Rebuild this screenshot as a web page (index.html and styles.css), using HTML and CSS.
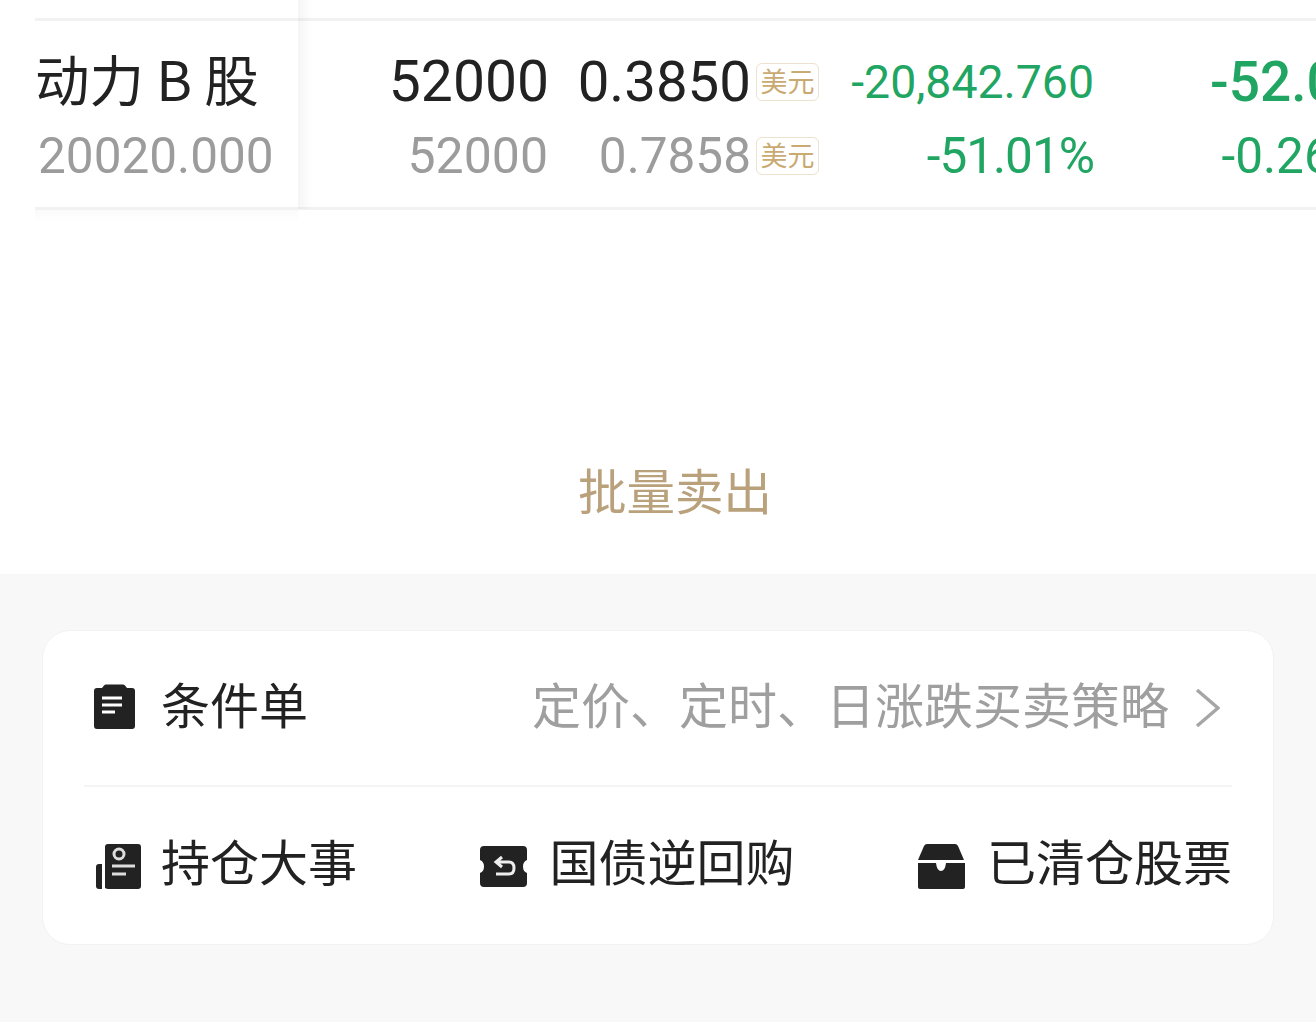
FILE: index.html
```html
<!DOCTYPE html>
<html lang="zh">
<head>
    <meta charset="UTF-8">
    <meta name="viewport" content="width=device-width, initial-scale=1.0">
    <title>持仓</title>
    <link rel="stylesheet" href="styles.css">
</head>
<body>
    <section class="holdings">
        <div class="table-row">
            <div class="cell name-cell">
                <div class="line main-line name">动力 B 股</div>
                <div class="line sub-line name-sub">20020.000</div>
            </div>
            <div class="cell qty-cell">
                <div class="line main-line">52000</div>
                <div class="line sub-line qty-sub">52000</div>
            </div>
            <div class="cell price-cell">
                <div class="line main-line price">0.3850<span class="tag">美元</span></div>
                <div class="line sub-line">0.7858<span class="tag">美元</span></div>
            </div>
            <div class="cell value-cell">
                <div class="line value-line down">-20,842.760</div>
                <div class="line sub-line down pct">-51.01%</div>
            </div>
            <div class="cell today-cell">
                <div class="line main-line down bold">-52.08</div>
                <div class="line sub-line down today-sub">-0.26%</div>
            </div>
        </div>
        <div class="batch-sell">批量卖出</div>
    </section>

    <section class="tools">
        <div class="card">
            <div class="card-row order-row">
                <div class="tool">
                    <svg class="icon" viewBox="0 0 56 56">
                        <path fill="#222" d="M9 11q0-3 3-3h5l2-2.500q1-1 2-1h17q1 0 2 1l2 2.500h5q3 0 3 3v35q0 3-3 3H12q-3 0-3-3z"/>
                        <path stroke="#fff" stroke-width="3" d="M17 18h20M17 25h20M17 32h13" fill="none"/>
                    </svg>
                    <span>条件单</span>
                </div>
                <div class="hint">
                    <span>定价、定时、日涨跌买卖策略</span>
                    <svg class="chevron" viewBox="0 0 28 40"><path d="M5 2l21 18L5 38" fill="none" stroke="#a6a6a6" stroke-width="3.500"/></svg>
                </div>
            </div>
            <div class="card-row links-row">
                <div class="tool">
                    <svg class="icon" viewBox="0 0 56 56">
                        <path fill="#222" d="M20 9q0-3 3-3h30q3 0 3 3v39q0 3-3 3H23q-1 0-3-1z"/>
                        <path fill="#222" d="M11 29q0-3 3-3h3v25h-3q-3 0-3-3z"/>
                        <circle cx="34" cy="16" r="5" fill="none" stroke="#ddd" stroke-width="3"/>
                        <path stroke="#ddd" stroke-width="3" d="M27 28h23M27 36h14" fill="none"/>
                    </svg>
                    <span>持仓大事</span>
                </div>
                <div class="tool">
                    <svg class="icon" viewBox="0 0 56 56">
                        <path fill="#222" d="M11 8h39q4 0 4 4v10q-4 1.500-4 6.500t4 6.500v10q0 4-4 4H11q-4 0-4-4V35q4-1.500 4-6.500t-4-6.500V12q0-4 4-4z"/>
                        <path fill="none" stroke="#eee" stroke-width="3" d="M29 19l-6 5 6 5M23 24h13q5 0 5 6t-5 6H23"/>
                    </svg>
                    <span>国债逆回购</span>
                </div>
                <div class="tool">
                    <svg class="icon" viewBox="-1 0 56 56">
                        <path fill="#222" d="M12 8q1-2 3-2h28q2 0 3 2l6 14H6z"/>
                        <path fill="#222" d="M6 25h18q1 8 5 8t5-8h19v24q0 2-2 2H8q-2 0-2-2z"/>
                    </svg>
                    <span>已清仓股票</span>
                </div>
            </div>
        </div>
    </section>
</body>
</html>
```

FILE: styles.css
```css
body {
    margin: 0;
    height: 1022px;
    overflow: hidden;
    background-color: #f8f8f8;
    color: #222;
    font-family: 'Roboto', 'Noto Sans CJK SC', sans-serif;
}

.holdings {
    height: 574px;
    background: white;
    padding-top: 18px;
    box-sizing: border-box;
    overflow: hidden;
}

.table-row {
    display: flex;
    width: 1400px;
    height: 162px;
    margin-left: 35px;
    padding-top: 24px;
    border-top: 3px solid #f2f2f2;
    border-bottom: 3px solid #f2f2f2;
}

.cell {
    flex: none;
    text-align: right;
}

.line {
    height: 74px;
    line-height: 74px;
    white-space: nowrap;
}

.main-line {
    font-size: 57px;
}

.sub-line {
    font-size: 49.5px;
    color: #9c9c9c;
}

.value-line {
    font-size: 46.4px;
}

.name-cell {
    position: relative;
    width: 263px;
    box-sizing: border-box;
    text-align: left;
}

/* 固定列右侧的阴影 */
.name-cell::after {
    content: "";
    position: absolute;
    top: -45px;
    bottom: -2px;
    right: -14px;
    width: 14px;
    background: linear-gradient(to right, rgba(0,0,0,0.04), rgba(0,0,0,0));
}

/* 固定列底部的阴影 */
.name-cell::before {
    content: "";
    position: absolute;
    left: 0;
    right: 0;
    bottom: -16px;
    height: 13px;
    background: linear-gradient(to bottom, rgba(0,0,0,0.02), rgba(0,0,0,0));
}

.name {
    font-family: 'Noto Sans CJK SC', sans-serif;
    font-size: 54.5px;
    line-height: 66px;
}

.name-sub {
    padding-left: 3px;
}

.qty-cell {
    width: 251px;
}

.qty-sub {
    font-size: 50px;
    padding-right: 1px;
}

.price-cell {
    width: 270px;
    display: flex;
    flex-direction: column;
}

.price-cell .line {
    display: flex;
    justify-content: flex-end;
    align-items: center;
}

.price {
    font-size: 56.4px;
}

.tag {
    width: 63px;
    height: 38px;
    margin-left: 5px;
    border: 1px solid #ece2cd;
    border-radius: 6px;
    box-sizing: border-box;
    color: #c9aa72;
    font-family: 'Noto Sans CJK SC', sans-serif;
    font-size: 27px;
    line-height: 34px;
    text-align: center;
}

.value-cell {
    width: 275px;
}

.pct {
    letter-spacing: -1px;
}

.today-cell {
    width: 275px;
}

.today-sub {
    padding-right: 1px;
}

.down {
    color: #20a562;
}

.bold {
    font-size: 55px;
    font-weight: 500;
}

.batch-sell {
    margin-top: 244px;
    padding-left: 34px;
    text-align: center;
    color: #b9a17c;
    font-family: 'Noto Sans CJK SC', sans-serif;
    font-size: 48.5px;
    line-height: 70px;
}

.tools {
    padding: 56px 42px 0;
}

.card {
    height: 315px;
    padding: 0 41px;
    background: white;
    border: 1px solid #f2f2f2;
    border-radius: 28px;
    box-sizing: border-box;
    font-family: 'Noto Sans CJK SC', sans-serif;
    font-size: 49px;
}

.card-row {
    display: flex;
    justify-content: space-between;
    align-items: center;
}

.order-row {
    height: 154px;
    border-bottom: 2px solid #f4f4f4;
}

.links-row {
    height: 157px;
}

.tool {
    display: flex;
    align-items: center;
    gap: 20px;
    padding-left: 1px;
    line-height: 60px;
}

.tool span,
.hint span {
    margin-bottom: 10px;
}

.links-row .tool span {
    margin-bottom: 12px;
}

.icon {
    width: 56px;
    height: 56px;
    flex: none;
}

.hint {
    display: flex;
    align-items: center;
    gap: 23px;
    color: #9f9f9f;
    line-height: 60px;
    white-space: nowrap;
}

.chevron {
    width: 28px;
    height: 40px;
    flex: none;
    margin-right: 12px;
}
```
